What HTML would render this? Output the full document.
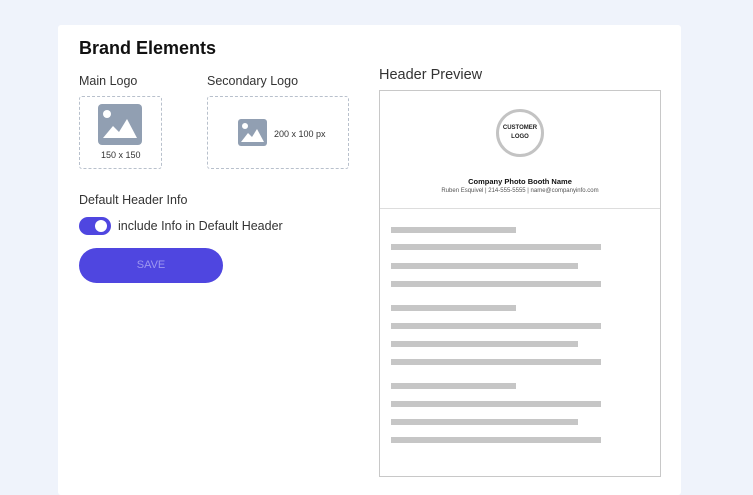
<!DOCTYPE html>
<html><head><style>
body{margin:0;width:753px;height:482px;background:#eff3fb;font-family:"Liberation Sans",sans-serif;position:relative;overflow:hidden}
.card{position:absolute;left:58px;top:25px;width:623px;height:470px;background:#fff;border-radius:3px}
.a{position:absolute;white-space:nowrap}
.dash{position:absolute;border:1px dashed #b8c0cc;border-radius:3px}
.bar{position:absolute;left:391px;height:6px;background:#c6c6c6}
</style></head><body>
<div class="card"></div>
<div class="a" style="left:79px;top:38px;font-size:18px;font-weight:bold;color:#111">Brand Elements</div>
<div class="a" style="left:79px;top:74px;font-size:12.5px;color:#333">Main Logo</div>
<div class="a" style="left:207px;top:74px;font-size:12.5px;color:#333">Secondary Logo</div>
<div class="dash" style="left:79px;top:96px;width:81px;height:71px"></div>
<div class="dash" style="left:207px;top:96px;width:140px;height:71px"></div>
<svg class="a" style="left:98px;top:104px" width="44" height="41" viewBox="0 0 44 41"><rect width="44" height="41" rx="4" fill="#919fb2"/><circle cx="9" cy="10" r="4" fill="#fff"/><path d="M5 34 L15 22 L21 28 L29 15 L39 34Z" fill="#fff"/></svg>
<div class="a" style="left:101px;top:150px;font-size:9px;color:#333">150 x 150</div>
<svg class="a" style="left:238px;top:119px" width="29" height="27" viewBox="0 0 29 27"><rect width="29" height="27" rx="3" fill="#919fb2"/><circle cx="7" cy="7" r="3" fill="#fff"/><path d="M3 23 L10 14 L14 18 L19 10 L26 23Z" fill="#fff"/></svg>
<div class="a" style="left:274px;top:129px;font-size:9px;color:#333">200 x 100 px</div>
<div class="a" style="left:79px;top:193px;font-size:12.5px;color:#333">Default Header Info</div>
<div class="a" style="left:79px;top:217px;width:32px;height:18px;border-radius:9px;background:#4f46e0"></div>
<div class="a" style="left:95px;top:220px;width:12px;height:12px;border-radius:50%;background:#fff"></div>
<div class="a" style="left:118px;top:219px;font-size:12.5px;color:#333">include Info in Default Header</div>
<div class="a" style="left:79px;top:248px;width:144px;height:35px;border-radius:18px;background:#4f46e0;color:#9d97f0;font-size:11px;text-align:center;line-height:35px">SAVE</div>
<div class="a" style="left:379px;top:67px;font-size:14.5px;color:#333">Header Preview</div>
<div class="a" style="left:379px;top:90px;width:280px;height:385px;border:1px solid #c8c8c8"></div>
<div class="a" style="left:380px;top:208px;width:280px;height:1px;background:#ddd"></div>
<div class="a" style="left:496px;top:109px;width:42px;height:42px;border:3px solid #c3c3c3;border-radius:50%;font-size:6px;font-weight:bold;text-align:center;line-height:9px;display:flex;align-items:center;justify-content:center;color:#222">CUSTOMER<br>LOGO</div>
<div class="a" style="left:380px;width:280px;top:177px;text-align:center;font-size:7.5px;font-weight:bold;color:#111">Company Photo Booth Name</div>
<div class="a" style="left:380px;width:280px;top:188px;text-align:center;font-size:6px;color:#555">Ruben Esquivel | 214-555-5555 | name@companyinfo.com</div>
<div class="bar" style="top:227px;width:125px"></div>
<div class="bar" style="top:244px;width:210px"></div>
<div class="bar" style="top:263px;width:187px"></div>
<div class="bar" style="top:281px;width:210px"></div>
<div class="bar" style="top:305px;width:125px"></div>
<div class="bar" style="top:323px;width:210px"></div>
<div class="bar" style="top:341px;width:187px"></div>
<div class="bar" style="top:359px;width:210px"></div>
<div class="bar" style="top:383px;width:125px"></div>
<div class="bar" style="top:401px;width:210px"></div>
<div class="bar" style="top:419px;width:187px"></div>
<div class="bar" style="top:437px;width:210px"></div>
</body></html>
